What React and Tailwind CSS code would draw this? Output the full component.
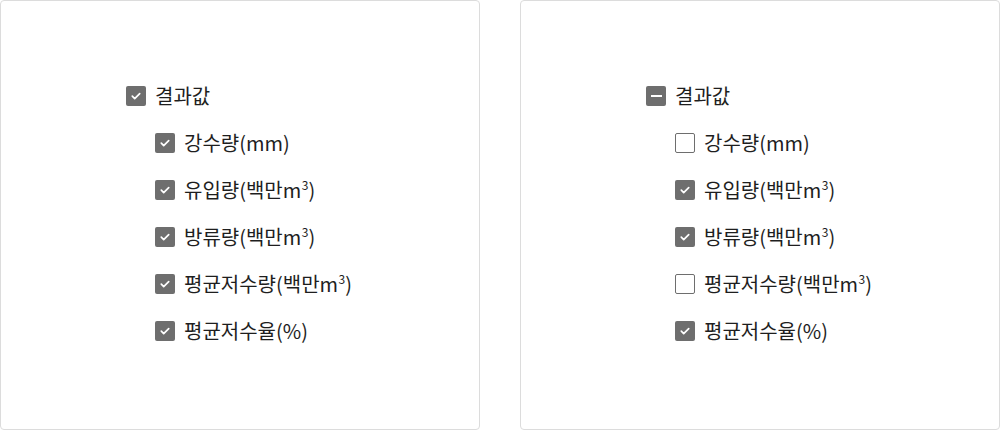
import { useState } from "react";

const M3 = (
    <>
        m<sup className="text-[12px] -top-[0.7em] ml-[0.5px]">3</sup>
    </>
);

const ITEMS = [
    { id: "rain", label: "강수량(mm)" },
    { id: "inflow", label: <>유입량(백만{M3})</> },
    { id: "outflow", label: <>방류량(백만{M3})</> },
    { id: "storage", label: <>평균저수량(백만{M3})</> },
    { id: "rate", label: "평균저수율(%)" },
];

function Box({ state, onClick }) {
    // state: "on" | "off" | "mixed"
    if (state === "off") {
        return (
            <button
                onClick={onClick}
                className="w-5 h-5 shrink-0 rounded-[2px] border-[1.5px] border-[#6e6e6e] bg-white"
            />
        );
    }
    return (
        <button
            onClick={onClick}
            className="w-5 h-5 shrink-0 rounded-[2px] bg-[#6e6e6e] flex items-center justify-center"
        >
            {state === "on" ? (
                <svg width="12" height="12" viewBox="0 0 12 12" fill="none">
                    <path d="M2.3 6.2l2.4 2.4 5-5" stroke="white" strokeWidth="1.7" strokeLinecap="round" strokeLinejoin="round" />
                </svg>
            ) : (
                <span className="block w-[11px] h-[2px] bg-white" />
            )}
        </button>
    );
}

function TreePanel({ initial }) {
    const [checked, setChecked] = useState(initial);
    const count = ITEMS.filter((i) => checked[i.id]).length;
    const parentState = count === ITEMS.length ? "on" : count === 0 ? "off" : "mixed";

    const toggleAll = () => {
        const next = parentState !== "on";
        setChecked(Object.fromEntries(ITEMS.map((i) => [i.id, next])));
    };

    return (
        <div className="flex-1 h-[430px] bg-white border border-[#dcdcdc] rounded-[4px] pl-[125px] pt-[85px]">
            <div className="flex items-center gap-[9px] h-5">
                <Box state={parentState} onClick={toggleAll} />
                <span className="text-[20px] leading-5 text-[#1e1e1e]">결과값</span>
            </div>
            <div className="pl-[29px] flex flex-col gap-[27px] mt-[27px]">
                {ITEMS.map((item) => (
                    <div key={item.id} className="flex items-center gap-[9px] h-5">
                        <Box
                            state={checked[item.id] ? "on" : "off"}
                            onClick={() => setChecked({ ...checked, [item.id]: !checked[item.id] })}
                        />
                        <span className="text-[20px] leading-5 text-[#1e1e1e] whitespace-nowrap">{item.label}</span>
                    </div>
                ))}
            </div>
        </div>
    );
}

export default function App() {
    return (
        <div
            className="w-[1000px] h-[431px] bg-white flex gap-10"
            style={{ fontFamily: '"Noto Sans CJK KR", "Noto Sans", sans-serif' }}
        >
            <TreePanel initial={{ rain: true, inflow: true, outflow: true, storage: true, rate: true }} />
            <TreePanel initial={{ rain: false, inflow: true, outflow: true, storage: false, rate: true }} />
        </div>
    );
}
